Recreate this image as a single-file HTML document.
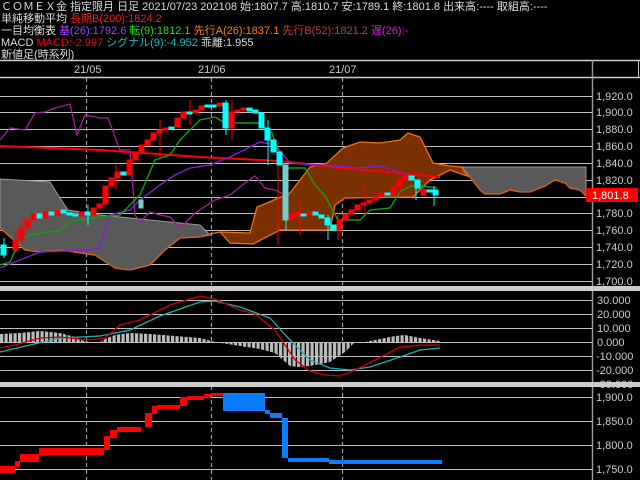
<!DOCTYPE html>
<html><head><meta charset="utf-8"><style>
html,body{margin:0;padding:0;background:#000;width:640px;height:480px;overflow:hidden}
.h{position:absolute;left:1px;font:11px "Liberation Sans","Noto Sans CJK JP",sans-serif;color:#ddd;white-space:nowrap;line-height:12px}
svg{position:absolute;left:0;top:0}
</style></head><body>
<svg width="640" height="480" viewBox="0 0 640 480">
<defs>
<pattern id="hb" width="4.5" height="10" patternUnits="userSpaceOnUse"><rect x="0" y="0" width="3.2" height="10" fill="#bbb"/></pattern>
</defs>
<line x1="0" y1="60.5" x2="640" y2="60.5" stroke="#ccc" stroke-width="1.5"/>
<line x1="0" y1="77.5" x2="640" y2="77.5" stroke="#ccc" stroke-width="1.5"/>
<line x1="592.5" y1="60" x2="592.5" y2="480" stroke="#999" stroke-width="1.5"/>
<line x1="638.5" y1="60" x2="638.5" y2="78" stroke="#ccc"/>
<g font-family="Liberation Sans" font-size="11" fill="#ccc">
<text x="74" y="73">21/05</text><text x="198" y="73">21/06</text><text x="329" y="73">21/07</text>
</g>
<g stroke="#c0c0c0" stroke-width="1">
<line x1="0" y1="96.5" x2="592" y2="96.5"/><line x1="0" y1="112.5" x2="592" y2="112.5"/><line x1="0" y1="129.5" x2="592" y2="129.5"/><line x1="0" y1="146.5" x2="592" y2="146.5"/><line x1="0" y1="163.5" x2="592" y2="163.5"/><line x1="0" y1="180.5" x2="592" y2="180.5"/><line x1="0" y1="197.5" x2="592" y2="197.5"/><line x1="0" y1="213.5" x2="592" y2="213.5"/><line x1="0" y1="230.5" x2="592" y2="230.5"/><line x1="0" y1="247.5" x2="592" y2="247.5"/><line x1="0" y1="264.5" x2="592" y2="264.5"/><line x1="0" y1="281.5" x2="592" y2="281.5"/>
<line x1="0" y1="300.5" x2="592" y2="300.5"/><line x1="0" y1="314.5" x2="592" y2="314.5"/><line x1="0" y1="328.5" x2="592" y2="328.5"/><line x1="0" y1="342.5" x2="592" y2="342.5"/><line x1="0" y1="356.5" x2="592" y2="356.5"/><line x1="0" y1="370.5" x2="592" y2="370.5"/>
<line x1="0" y1="397.5" x2="592" y2="397.5"/><line x1="0" y1="421.5" x2="592" y2="421.5"/><line x1="0" y1="445.5" x2="592" y2="445.5"/><line x1="0" y1="469.5" x2="592" y2="469.5"/>
</g>
<g stroke="#999" stroke-dasharray="4,3" stroke-width="1.2">
<line x1="86.5" y1="78" x2="86.5" y2="480"/><line x1="211.5" y1="78" x2="211.5" y2="480"/><line x1="342.5" y1="78" x2="342.5" y2="480"/>
</g>
<polygon fill="#595959" stroke="#999" stroke-width="1" points="0,179 50,182 60,198 68,210 100,215 200,225 210,235 200,237 180,238 165,250 150,265 130,270 115,268 95,255 60,250 40,252 25,250 0,228"/>
<polyline fill="none" stroke="#e06010" stroke-width="1.3" points="0,228 25,250 40,252 60,250 95,255 115,268 130,270 150,265 165,250 180,238 200,237 210,234"/>
<polygon fill="#7a3000" stroke="#f07010" stroke-width="1.3" points="210,234 220,232 250,233 257,207 267,203 290,193 310,167 327,163 343,148 360,142 380,143 400,140 408,133 420,137 433,163 450,166 462,167 470,177 450,170 430,180 420,190 413,197 345,198 335,205 330,230 280,230 253,244 230,243 220,232"/>
<polygon fill="#595959" stroke="#999" stroke-width="1" points="462,167 470,177 480,190 485,194 500,194 510,190 520,192 530,192 545,186 555,180 565,183 570,188 580,190 586,196 586,167"/>
<polyline fill="none" stroke="#e06010" stroke-width="1.3" points="462,170 470,177 480,190 485,194 500,194 510,190 520,192 530,192 545,186 555,180 565,183 570,188 580,190 586,196"/>
<polyline fill="none" stroke="#f00" stroke-width="2" points="0,146 100,150 200,157 280,161 340,168 400,173 440,177"/>
<polyline fill="none" stroke="#a0209a" stroke-width="1.3" points="0,140 10,128 25,130 35,113 45,112 55,108 70,104 77,135 85,115 100,118 108,118 120,150 130,150 135,215 140,222 150,212 160,215 170,217 180,228 195,213 215,200 230,195 245,183 255,176 265,188 275,190 285,195 290,196"/>
<polyline fill="none" stroke="#8020d0" stroke-width="1.4" points="0,268 20,260 40,252 90,250 100,248 110,215 130,210 140,200 160,185 175,175 190,168 210,165 230,157 250,147 260,142 275,145 290,163 320,165 360,168 380,166 410,176 425,190 435,190"/>
<polyline fill="none" stroke="#10a010" stroke-width="1.4" points="0,265 10,262 20,240 30,235 60,230 70,222 100,217 120,215 140,195 155,160 170,155 180,140 200,120 215,117 225,123 258,123 272,133 283,165 288,168 305,168 315,185 325,196 338,220 360,220 370,210 390,208 400,192 410,186 420,186 437,188"/>
<g stroke-width="1">
<g fill="#f00" stroke="#f00">
<line x1="16" y1="228" x2="16" y2="252"/><line x1="22" y1="218" x2="22" y2="242"/><line x1="116" y1="165" x2="116" y2="190"/><line x1="160" y1="120" x2="160" y2="160"/><line x1="190" y1="100" x2="190" y2="125"/><line x1="232" y1="100" x2="232" y2="140"/><line x1="278" y1="150" x2="278" y2="245"/><line x1="300" y1="200" x2="300" y2="235"/><line x1="338" y1="212" x2="338" y2="240"/><line x1="365" y1="185" x2="365" y2="215"/><line x1="400" y1="170" x2="400" y2="195"/>
<rect x="13" y="240" width="5" height="10"/><rect x="19" y="228" width="5" height="12"/><rect x="25" y="220" width="5" height="8"/><rect x="31" y="214" width="5" height="6"/><rect x="43" y="212" width="5" height="6"/><rect x="55" y="210" width="5" height="5"/><rect x="79" y="212" width="5" height="4"/><rect x="91" y="208" width="5" height="7"/><rect x="97" y="204" width="5" height="4"/><rect x="103" y="186" width="5" height="18"/><rect x="109" y="178" width="5" height="8"/><rect x="115" y="172" width="5" height="6"/><rect x="127" y="160" width="5" height="15"/><rect x="133" y="152" width="5" height="8"/><rect x="139" y="145" width="5" height="7"/><rect x="145" y="140" width="5" height="5"/><rect x="151" y="133" width="5" height="7"/><rect x="157" y="130" width="5" height="3"/><rect x="163" y="128" width="5" height="2"/><rect x="175" y="118" width="5" height="9"/><rect x="181" y="112" width="5" height="6"/><rect x="193" y="110" width="5" height="3"/><rect x="199" y="106" width="5" height="4"/><rect x="217" y="103" width="5" height="3"/><rect x="229" y="112" width="5" height="16"/><rect x="235" y="110" width="5" height="2"/><rect x="241" y="108" width="5" height="2"/><rect x="289" y="214" width="5" height="6"/><rect x="295" y="212" width="5" height="4"/><rect x="307" y="212" width="5" height="3"/><rect x="337" y="220" width="5" height="10"/><rect x="343" y="214" width="5" height="6"/><rect x="349" y="210" width="5" height="4"/><rect x="355" y="205" width="5" height="5"/><rect x="361" y="203" width="5" height="2"/><rect x="367" y="200" width="5" height="3"/><rect x="373" y="196" width="5" height="4"/><rect x="379" y="193" width="5" height="3"/><rect x="391" y="187" width="5" height="8"/><rect x="397" y="180" width="5" height="7"/><rect x="403" y="176" width="5" height="4"/><rect x="421" y="190" width="5" height="5"/>
</g>
<g fill="#0ff" stroke="#0ff">
<line x1="4" y1="238" x2="4" y2="258"/><line x1="88" y1="205" x2="88" y2="225"/><line x1="226" y1="100" x2="226" y2="135"/><line x1="268" y1="120" x2="268" y2="165"/><line x1="286" y1="185" x2="286" y2="230"/><line x1="328" y1="215" x2="328" y2="240"/><line x1="416" y1="180" x2="416" y2="200"/><line x1="434" y1="186" x2="434" y2="206"/>
<rect x="1" y="245" width="5" height="10"/><rect x="37" y="214" width="5" height="4"/><rect x="49" y="212" width="5" height="3"/><rect x="61" y="210" width="5" height="3"/><rect x="67" y="213" width="5" height="2"/><rect x="73" y="214" width="5" height="2"/><rect x="85" y="212" width="5" height="3"/><rect x="121" y="172" width="5" height="3"/><rect x="169" y="127" width="5" height="2"/><rect x="187" y="112" width="5" height="2"/><rect x="205" y="105" width="5" height="2"/><rect x="211" y="105" width="5" height="2"/><rect x="223" y="103" width="5" height="25"/><rect x="247" y="108" width="5" height="3"/><rect x="253" y="110" width="5" height="3"/><rect x="259" y="113" width="5" height="15"/><rect x="265" y="128" width="5" height="12"/><rect x="271" y="140" width="5" height="12"/><rect x="277" y="152" width="5" height="13"/><rect x="301" y="214" width="5" height="2"/><rect x="313" y="212" width="5" height="3"/><rect x="319" y="215" width="5" height="3"/><rect x="325" y="218" width="5" height="7"/><rect x="331" y="225" width="5" height="5"/><rect x="385" y="193" width="5" height="2"/><rect x="409" y="176" width="5" height="4"/><rect x="415" y="180" width="5" height="8"/><rect x="427" y="190" width="5" height="2"/><rect x="433" y="190" width="5" height="5"/>
</g>
<g fill="#7cc" stroke="#7cc"><rect x="283" y="165" width="5" height="55"/><rect x="139" y="200" width="4" height="8"/></g>
</g>
<rect x="586" y="188" width="52" height="14" fill="#f00"/>
<g font-family="Liberation Sans" font-size="11" fill="#ccc">
<text x="596" y="100">1,920.0</text><text x="596" y="116">1,900.0</text><text x="596" y="133">1,880.0</text><text x="596" y="150">1,860.0</text><text x="596" y="167">1,840.0</text><text x="596" y="184">1,820.0</text><text x="596" y="217">1,780.0</text><text x="596" y="234">1,760.0</text><text x="596" y="251">1,740.0</text><text x="596" y="268">1,720.0</text><text x="596" y="285">1,700.0</text>
<text x="592" y="199" fill="#fff">1,801.8</text>
<text x="597" y="304">30.000</text><text x="597" y="318">20.000</text><text x="597" y="332">10.000</text><text x="597" y="346">0.000</text><text x="596" y="360">-10.000</text><text x="596" y="374">-20.000</text><text x="596" y="388">-30.000</text>
<text x="596" y="401">1,900.0</text><text x="596" y="425">1,850.0</text><text x="596" y="449">1,800.0</text><text x="596" y="473">1,750.0</text>
</g>
<rect x="0" y="286" width="640" height="5" fill="#ccc"/>
<rect x="0" y="382" width="640" height="5" fill="#ccc"/>
<polygon fill="url(#hb)" points="0,342 0,334 20,333 40,331 60,333 75,337 80,340 90,342 100,342 105,339 115,335 130,333 150,334 175,336 200,338 215,342 222,342 240,346 260,349 275,353 290,366 300,367 310,366 330,362 345,352 355,342 365,342 380,339 395,336 405,335 420,338 440,341 440,342"/>
<rect x="0" y="343" width="445" height="39" fill="#000"/>
<line x1="0" y1="356.5" x2="592" y2="356.5" stroke="#c0c0c0"/><line x1="0" y1="370.5" x2="592" y2="370.5" stroke="#c0c0c0"/>
<polygon fill="url(#hb)" points="215,342 240,346 260,349 275,353 290,366 300,367 310,366 330,362 345,352 355,342"/>
<polyline fill="none" stroke="#20b0b0" stroke-width="1.3" points="0,352 30,345 60,338 100,336 130,330 160,316 200,302 215,301 240,307 270,318 290,340 310,360 330,368 350,370 370,367 400,357 420,350 440,348"/>
<polyline fill="none" stroke="#c00" stroke-width="1.3" points="0,348 15,345 40,338 60,337 90,340 105,338 120,325 140,320 170,305 200,296 215,299 240,310 255,314 275,330 285,345 295,360 310,371 325,375 340,376 355,370 375,360 400,347 420,345 440,345"/>
<g fill="#f00">
<rect x="0" y="466" width="15" height="7"/><rect x="15" y="461" width="5" height="6"/><rect x="20" y="454" width="19" height="8"/><rect x="39" y="448" width="65" height="7"/><rect x="104" y="436" width="6" height="14"/><rect x="110" y="430" width="7" height="8"/><rect x="117" y="427" width="24" height="5"/><rect x="145" y="413" width="7" height="14"/><rect x="152" y="406" width="5" height="8"/><rect x="157" y="405" width="23" height="4"/><rect x="180" y="397" width="7" height="9"/><rect x="187" y="396" width="17" height="4"/><rect x="204" y="394" width="7" height="4"/><rect x="211" y="393" width="12" height="3"/>
</g>
<g fill="#0a7cff">
<rect x="223" y="393" width="42" height="18"/><rect x="265" y="410" width="5" height="4"/><rect x="270" y="413" width="12" height="5"/><rect x="282" y="418" width="6" height="40"/><rect x="288" y="458" width="41" height="4"/><rect x="329" y="460" width="113" height="4"/>
</g>
</svg>
<div class="h" style="top:1px">ＣＯＭＥＸ金 指定限月 日足 2021/07/23 202108 始:1807.7 高:1810.7 安:1789.1 終:1801.8 出来高:---- 取組高:----</div>
<div class="h" style="top:13px">単純移動平均 <span style="color:#f02020">長期B(200):1824.2</span></div>
<div class="h" style="top:25px">一目均衡表 <span style="color:#a040ff">基(26):1792.6</span> <span style="color:#20e020">転(9):1812.1</span> <span style="color:#ff8000">先行A(26):1837.1</span> <span style="color:#c04040">先行B(52):1821.2</span> <span style="color:#d020d0">遅(26):-</span></div>
<div class="h" style="top:37px">MACD <span style="color:#f00">MACD:-2.997</span> <span style="color:#10c0c0">シグナル(9):-4.952</span> 乖離:1.955</div>
<div class="h" style="top:49px">新値足(時系列)</div>
</body></html>
